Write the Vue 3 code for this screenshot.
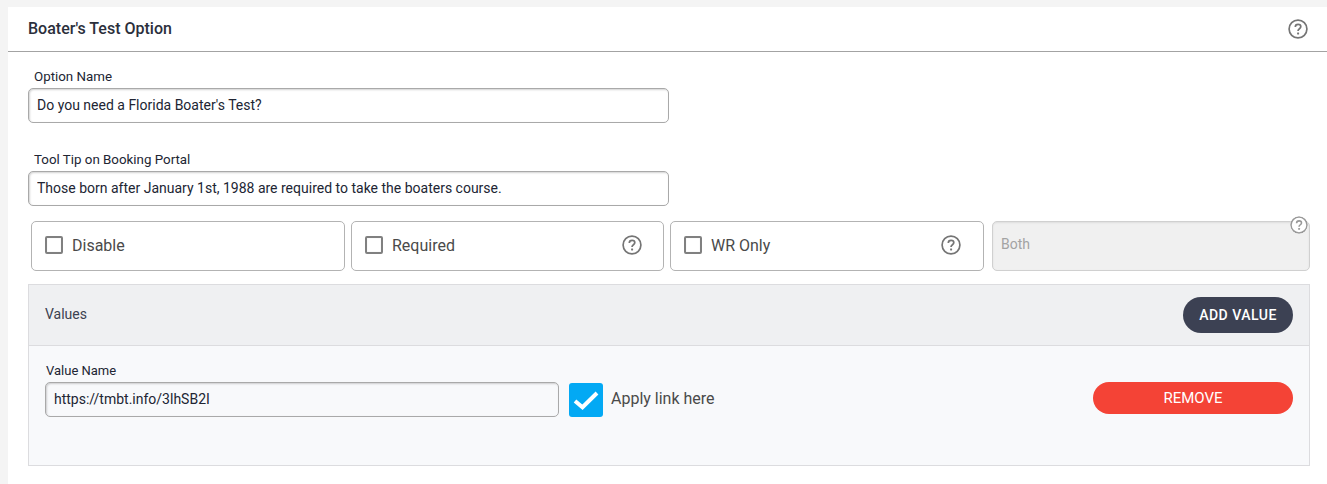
<script setup>
const checks = [
  { label: 'Disable', help: false },
  { label: 'Required', help: true },
  { label: 'WR Only', help: true }
]
</script>

<template>
  <main class="page">
    <section class="card">
      <header class="head">
        <h1>Boater's Test Option</h1>
        <svg class="help help-head" viewBox="0 0 20 20" aria-hidden="true">
          <circle cx="10" cy="10" r="8.9" />
          <path d="M7.3 8c0-1.6 1.2-2.6 2.8-2.6s2.7 1 2.7 2.3c0 2-2.8 2.1-2.8 4.3" />
          <rect x="9.1" y="13.4" width="2" height="2" rx=".4" />
        </svg>
      </header>

      <div class="body">
        <div class="field first">
          <label>Option Name</label>
          <input type="text" value="Do you need a Florida Boater's Test?" />
        </div>
        <div class="field second">
          <label>Tool Tip on Booking Portal</label>
          <input type="text" value="Those born after January 1st, 1988 are required to take the boaters course." />
        </div>

        <div class="options">
          <div v-for="c in checks" :key="c.label" class="check-card">
            <span class="box"></span>
            <span class="check-label">{{ c.label }}</span>
            <svg v-if="c.help" class="help help-card" viewBox="0 0 20 20" aria-hidden="true">
              <circle cx="10" cy="10" r="8.9" />
              <path d="M7.3 8c0-1.6 1.2-2.6 2.8-2.6s2.7 1 2.7 2.3c0 2-2.8 2.1-2.8 4.3" />
              <rect x="9.1" y="13.4" width="2" height="2" rx=".4" />
            </svg>
          </div>
          <div class="select-card">
            <span>Both</span>
            <svg class="help help-select" viewBox="0 0 20 20" aria-hidden="true">
              <circle cx="10" cy="10" r="8.9" />
              <path d="M7.3 8c0-1.6 1.2-2.6 2.8-2.6s2.7 1 2.7 2.3c0 2-2.8 2.1-2.8 4.3" />
              <rect x="9.1" y="13.4" width="2" height="2" rx=".4" />
            </svg>
          </div>
        </div>

        <section class="values">
          <div class="values-head">
            <span class="values-title">Values</span>
            <button class="btn add" type="button">ADD VALUE</button>
          </div>
          <div class="values-body">
            <div class="field value-field">
              <label>Value Name</label>
              <input type="text" value="https://tmbt.info/3lhSB2I" />
            </div>
            <div class="checked">
              <svg viewBox="0 0 34 34" aria-hidden="true">
                <rect width="34" height="34" rx="3" fill="#03a9f4" />
                <path d="M6 18l7.5 6.2L28 10" fill="none" stroke="#fff" stroke-width="4" />
              </svg>
            </div>
            <span class="apply">Apply link here</span>
            <button class="btn remove" type="button">REMOVE</button>
          </div>
        </section>
      </div>
    </section>
  </main>
</template>

<style>
html, body { margin: 0; background: #f4f4f4; }
</style>

<style scoped>
.page {
  box-sizing: border-box;
  height: 484px;
  padding: 7px 0 0 8px;
  overflow: hidden;
  font-family: Roboto, "Liberation Sans", sans-serif;
  background: #f4f4f4;
}
.card { background: #fff; height: 477px; }
.head {
  box-sizing: border-box;
  height: 45px;
  display: flex;
  align-items: center;
  justify-content: space-between;
  padding: 0 19px 1px 20px;
  border-bottom: 1px solid #a3a3a3;
}
h1 { margin: 0; font-size: 16px; font-weight: 500; color: #2b2f3c; }
.help { display: block; fill: none; stroke: #757575; stroke-width: 1.7; }
.help rect { fill: #757575; stroke: none; }
.help-head { width: 20px; height: 20px; }
.body { padding: 0 17px 0 20px; }
.field { display: flex; flex-direction: column; }
.field label {
  font-size: 13.33px;
  line-height: 15px;
  color: #212533;
  margin: 0 0 4px 6px;
}
.field input {
  box-sizing: border-box;
  width: 641px;
  height: 35px;
  padding: 0 8px 2px;
  border: 1px solid #a9a9a9;
  border-radius: 5px;
  box-shadow: inset 1px 1px 2px rgba(0, 0, 0, .18);
  background: #fff;
  font: 14px Roboto, sans-serif;
  color: #212533;
  outline: none;
}
.first { padding-top: 17px; }
.second { padding-top: 29px; }
.options {
  display: flex;
  margin: 15px 0 13px 3px;
  height: 50px;
}
.check-card {
  box-sizing: border-box;
  width: 314px;
  margin-right: 6px;
  display: flex;
  align-items: center;
  padding: 0 21px 2px 13px;
  border: 1px solid #b3b3b3;
  border-radius: 5px;
  background: #fff;
}
.check-card:nth-child(2) { width: 313px; }
.check-card:nth-child(3) { margin-right: 8px; padding-right: 22px; }
.box {
  box-sizing: border-box;
  width: 18px;
  height: 18px;
  border: 2px solid #808080;
  border-radius: 2px;
  box-shadow: inset 0 0 1px rgba(0,0,0,.2);
}
.check-label {
  flex: 1;
  margin-left: 9px;
  font-size: 16px;
  color: #4a4a4a;
}
.help-card { width: 20px; height: 20px; }
.select-card {
  position: relative;
  box-sizing: border-box;
  width: 318px;
  display: flex;
  align-items: center;
  padding: 0 8px 5px;
  border: 1px solid #d0d0d0;
  border-radius: 5px;
  background: #f0f0f0;
  box-shadow: inset 0 1px 2px rgba(0,0,0,.08);
  font-size: 14px;
  color: #a3a3a3;
}
.help-select {
  position: absolute;
  top: -6px;
  right: 1px;
  width: 18px;
  height: 18px;
  stroke: #999;
  background: #fff;
  border-radius: 50%;
}
.help-select rect { fill: #999; }
.values {
  box-sizing: border-box;
  width: 1282px;
  height: 182px;
  border: 1px solid #dcdcdf;
  background: #f8f9fb;
}
.values-head {
  box-sizing: border-box;
  height: 61px;
  display: flex;
  align-items: center;
  justify-content: space-between;
  padding: 0 16px;
  background: #eff0f2;
  border-bottom: 1px solid #dcdcdf;
  font-size: 14px;
  color: #3c4150;
}
.values-title { margin-bottom: 2px; }
.btn {
  border: 0;
  padding: 0;
  color: #fff;
  font: 500 14px Roboto, sans-serif;
}
.add {
  width: 110px;
  height: 36px;
  border-radius: 18px;
  background: #3c4153;
  letter-spacing: .5px;
}
.values-body {
  display: flex;
  align-items: flex-start;
  padding: 17px 16px 0 16px;
}
.value-field label { margin-left: 1px; margin-bottom: 4px; font-size: 13px; }
.value-field input { width: 514px; background: #f8f9fb; }
.checked { margin: 20px 8px 0 10px; }
.checked svg { display: block; width: 34px; height: 34px; }
.apply {
  margin-top: 26px;
  flex: 1;
  font-size: 16px;
  line-height: 19px;
  color: #4a4a4a;
}
.remove {
  width: 200px;
  height: 32px;
  margin-top: 19px;
  border-radius: 16px;
  background: #f44336;
  font-size: 15px;
  font-weight: 400;
}
</style>
